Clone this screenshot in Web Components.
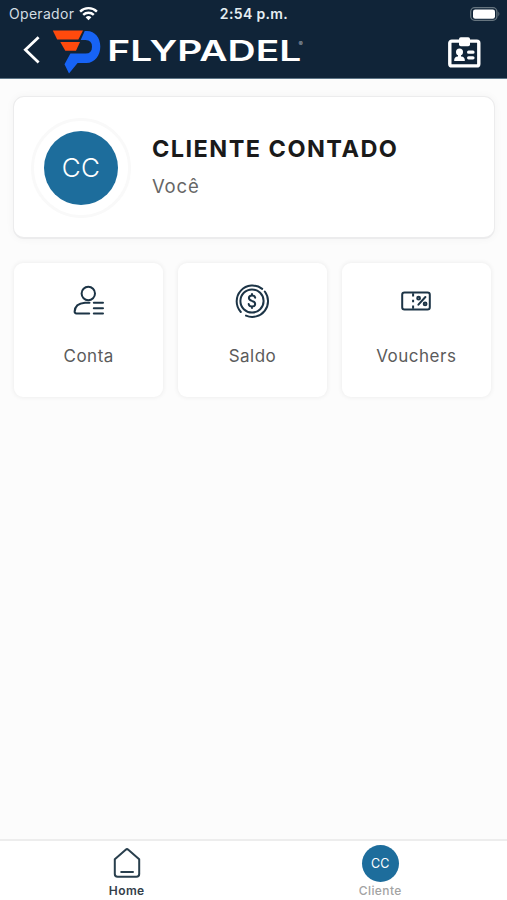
<!DOCTYPE html>
<html lang="pt">
<head>
<meta charset="utf-8">
<title>Flypadel</title>
<style>
body{margin:0;background:#fcfcfc;font-family:Inter,"Liberation Sans",sans-serif}
</style>
</head>
<body>
<client-app></client-app>
<script>
const define=(name,css,html)=>customElements.define(name,class extends HTMLElement{
  constructor(){
    super();
    this.attachShadow({mode:'open'}).innerHTML=`<style>*{box-sizing:border-box}svg{display:block}${css}</style>${html}`;
  }
});

define('status-bar',`
:host{display:grid;grid-template-columns:1fr auto 1fr;align-items:center;height:27px;padding:0 6px 0 9px;color:#e6eef2;font-size:14px;line-height:18px}
.op{display:flex;align-items:center;gap:5px;letter-spacing:.3px;color:#d3dde3}
.time{font-weight:600;letter-spacing:.35px;margin-right:2px}
.bat{justify-self:end}`,
`<div class="op"><span>Operador</span>
<svg width="19" height="15" viewBox="0 0 19 15" fill="none" stroke="#fff" stroke-width="2.4"><path d="M1.1 5.6a12 12 0 0 1 16.8 0M4.2 8.9a7.6 7.6 0 0 1 10.6 0"/><path d="M9.5 14.2 6.6 11.3a4.2 4.2 0 0 1 5.8 0z" fill="#fff" stroke="none"/></svg></div>
<div class="time">2:54 p.m.</div>
<svg class="bat" width="31" height="14" viewBox="0 0 31 14"><rect x=".7" y=".7" width="26.2" height="12.6" rx="4" fill="none" stroke="#66757f" stroke-width="1.3"/><rect x="3" y="2.4" width="22" height="9.4" rx="2.2" fill="#fff"/><path d="M28.4 4.6q2 2.4 0 4.8z" fill="#66757f"/></svg>`);

define('brand-logo',`:host{display:block}`,
`<svg width="254" height="46" viewBox="51 29 254 46">
<path d="M52.8 30.6H83L78.4 39.4H57.2z" fill="#ff4a0d"/><path d="M60.3 42H80l-4 8.8H65.3z" fill="#ff4a0d"/>
<path d="M84.7 31H87C95 31 100.3 38 100.3 46.5S95 63 86.5 63H77.6L69 73.5 64.5 64.2 70.4 53.6H85.5Q92 53.6 92 46.8T85.5 40H80.7z" fill="#1763f5"/>
<text x="107.3" y="61" font-family="Inter,sans-serif" font-weight="600" font-size="28.5" fill="#fff" textLength="194" lengthAdjust="spacingAndGlyphs">FLYPADEL</text>
<text x="298.5" y="46" font-family="Inter,sans-serif" font-size="6.5" fill="#a9b5bd">®</text></svg>`);

define('top-bar',`
:host{display:block;height:79px;background:#102438;border-bottom:1px solid #5d7586}
.row{display:flex;align-items:flex-start;height:51px;padding:2px 26px 0 22px}
.back{margin:7px 9px 0 0}.badge{margin:8px 0 0 auto}`,
`<status-bar></status-bar><div class="row">
<svg class="back" width="20" height="30" viewBox="0 0 20 30" fill="none" stroke="#fff" stroke-width="2.8"><path d="M16.6 1.3 3.4 13.8 16.6 26.4"/></svg>
<brand-logo></brand-logo>
<svg class="badge" width="34" height="32" viewBox="0 0 34 32"><rect x="2.8" y="4.1" width="29" height="24.8" rx="2" fill="none" stroke="#fff" stroke-width="3.4"/><rect x="12" y=".3" width="11" height="9" rx="1.8" fill="#fff"/><circle cx="12.5" cy="15" r="3.5" fill="#fff"/><path d="M11 16h3v4h-3zM7.2 24v-1.2q.3-3 3.4-3.4h3.8q3.1.4 3.4 3.4V24z" fill="#fff"/><path d="M21.6 15.2h4.4M21.6 20.8h4.4" stroke="#fff" stroke-width="3.2" stroke-linecap="round"/></svg></div>`);

define('initials-disc',`
:host{display:grid;place-items:center;width:var(--size);height:var(--size);border-radius:50%;background:#1d6d9c;color:#fff;font:var(--face)}`,
`<slot></slot>`);

define('profile-card',`
:host{display:flex;align-items:center;gap:21px;height:143px;padding:1px 17px 0;background:#fff;border:1.5px solid #ececed;border-bottom-width:2px;border-radius:11px;box-shadow:0 0 8px #0000000a}
.ring{display:grid;place-items:center;width:100px;height:100px;border-radius:50%;border:3px solid #f9f9f9;flex:none}
initials-disc{--size:74px;--face:300 26px Inter,sans-serif;letter-spacing:.3px}
h1{margin:0;font-size:23.5px;line-height:32px;font-weight:700;color:#1a1a1a;letter-spacing:1.45px;white-space:nowrap}
p{margin:8px 0 0;font-size:18.5px;line-height:26px;color:#666;letter-spacing:.8px}
.who{padding-bottom:4px}`,
`<div class="ring"><initials-disc>CC</initials-disc></div><div class="who"><h1><slot name="name"></slot></h1><p><slot name="role"></slot></p></div>`);

define('menu-tile',`
:host{display:flex;flex-direction:column;align-items:center;height:134px;background:#fff;border-radius:9px;box-shadow:0 0 4px 1px #0000000e;padding-top:20px}
.icon{display:grid;place-items:center;height:36px}
.label{margin-top:26px;font-size:17px;line-height:22px;color:#5b5b5b;letter-spacing:.5px}`,
`<div class="icon"><slot name="icon"></slot></div><div class="label"><slot></slot></div>`);

define('nav-item',`
:host{display:flex;flex-direction:column;align-items:center;color:var(--ink)}
.icon{display:grid;place-items:center;height:38px}
.label{font-size:12px;line-height:17px;font-weight:var(--weight);letter-spacing:.4px}`,
`<div class="icon"><slot name="icon"></slot></div><div class="label"><slot></slot></div>`);

define('bottom-nav',`
:host{display:grid;grid-template-columns:1fr 1fr;height:61px;background:#fff;border-top:2px solid #ededed;padding-top:3px}
.home{--ink:#34404a;--weight:600}.client{--ink:#a3a3a3;--weight:500}
initials-disc{--size:37px;--face:400 12.5px Inter,sans-serif}`,
`<nav-item class="home"><svg slot="icon" width="30" height="32" viewBox="0 0 30 32" fill="none" stroke="#293f4d" stroke-width="2" stroke-linejoin="round" stroke-linecap="round"><path d="M2.8 12.3 13.7 2.7q1.3-1.1 2.6 0L27.2 12.3V27q0 2.8-2.8 2.8H5.6q-2.8 0-2.8-2.8zM9.2 25H21"/></svg>Home</nav-item>
<nav-item class="client"><initials-disc slot="icon">CC</initials-disc>Cliente</nav-item>`);

define('client-app',`
:host{display:flex;flex-direction:column;height:900px;width:507px}
main{flex:1;padding:17px 12px 0 13px}
.tiles{display:grid;grid-template-columns:repeat(3,1fr);gap:14.5px;margin:24px 4px 0 1px}
svg{fill:none;stroke:#1c3446;stroke-width:2;stroke-linecap:round;stroke-linejoin:round}`,
`<top-bar></top-bar>
<main><profile-card><span slot="name">CLIENTE CONTADO</span><span slot="role">Você</span></profile-card>
<section class="tiles">
<menu-tile><svg slot="icon" width="32" height="32" viewBox="0 0 32 32"><circle cx="15.3" cy="8.5" r="6.7"/><path d="M16.5 17.8H12Q2 18.6 1.6 26.6q0 1.8 1.8 1.8h12.8M20.8 17.8H30M20.8 23.2H30M20.8 28.4H30"/></svg>Conta</menu-tile>
<menu-tile><svg slot="icon" width="36" height="36" viewBox="0 0 36 36"><circle cx="18" cy="18" r="11.6"/><path d="M6.8 29A15.8 15.8 0 0 1 28.2 5.9M30.8 8.5A15.8 15.8 0 0 1 12 32.6"/><path d="M21.2 14.7q-.5-2.2-3.2-2.2-3.1 0-3.1 2.6 0 2 3.1 2.8 3.2.7 3.2 3 0 2.6-3.2 2.6-2.8 0-3.3-2.4M18 11v1.5M18 23.6V25"/></svg>Saldo</menu-tile>
<menu-tile><svg slot="icon" width="32" height="22" viewBox="0 0 32 22"><rect x="2.2" y="2.5" width="27.6" height="17" rx="2.3"/><path d="M13.1 3.2v3.4M13.1 9.8v2.4M13.1 15.4v3.4" stroke-linecap="butt"/><path d="M18.4 14.7 25.4 7"/><circle cx="18.6" cy="8.2" r="1.4"/><circle cx="25.1" cy="13.9" r="1.4"/></svg>Vouchers</menu-tile>
</section></main><bottom-nav></bottom-nav>`);
</script>
</body>
</html>
